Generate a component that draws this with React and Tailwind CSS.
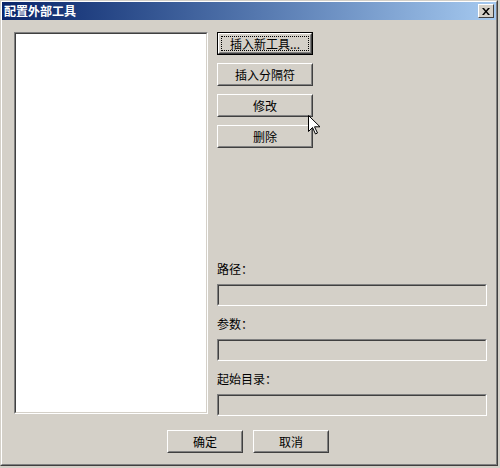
import React from 'react'

const font = { fontFamily: '"Noto Sans CJK SC", "Liberation Sans", sans-serif' }

function Btn({ children, isDefault }) {
  if (isDefault) {
    return (
      <div className="w-[96px] h-[23px] border border-black">
        <div className="w-full h-full border border-t-white border-l-white border-r-[#404040] border-b-[#404040] bg-[#d4d0c8]">
          <div className="w-full h-full border border-t-[#d4d0c8] border-l-[#d4d0c8] border-r-[#808080] border-b-[#808080] p-[1px]">
            <div className="w-full h-full border border-dotted border-black flex items-center justify-center text-[12px] text-black leading-none">
              {children}
            </div>
          </div>
        </div>
      </div>
    )
  }
  return (
    <div className="w-[96px] h-[23px] border border-t-white border-l-white border-r-[#404040] border-b-[#404040] bg-[#d4d0c8]">
      <div className="w-full h-full border border-t-[#d4d0c8] border-l-[#d4d0c8] border-r-[#808080] border-b-[#808080] flex items-center justify-center text-[12px] text-black leading-none">
        {children}
      </div>
    </div>
  )
}

function Sunken({ className, bg }) {
  return (
    <div className={`border border-t-[#808080] border-l-[#808080] border-r-white border-b-white ${className}`}>
      <div className={`w-full h-full border border-t-[#404040] border-l-[#404040] border-r-[#d4d0c8] border-b-[#d4d0c8] ${bg}`} />
    </div>
  )
}

export default function App() {
  return (
    <div className="w-[500px] h-[468px] bg-[#d4d0c8] overflow-hidden relative" style={font}>
      <div className="w-[498px] h-[466px] border border-t-[#d4d0c8] border-l-[#d4d0c8] border-r-[#404040] border-b-[#404040]">
        <div className="w-full h-full border border-t-white border-l-white border-r-[#808080] border-b-[#808080] flex flex-col">
          {/* title bar */}
          <div className="h-[18px] bg-gradient-to-r from-[#0a246a] to-[#a6caf0] flex items-center justify-between pl-[2px] pr-[2px]">
            <span className="text-white font-bold text-[12px] leading-none">配置外部工具</span>
            <div className="w-[16px] h-[14px] border border-t-white border-l-white border-r-[#404040] border-b-[#404040] bg-[#d4d0c8] flex items-center justify-center">
              <svg width="8" height="7" viewBox="0 0 8 7">
                <path d="M0 0h2l2 2.5L6 0h2L5 3.5 8 7H6L4 4.5 2 7H0l3-3.5z" fill="#000" />
              </svg>
            </div>
          </div>

          {/* body */}
          <div className="flex pl-[12px] pt-[12px]">
            <Sunken className="w-[194px] h-[382px]" bg="bg-white" />
            <div className="ml-[9px] w-[270px] h-[384px] flex flex-col">
              <div className="flex flex-col gap-[8px]">
                <Btn isDefault>插入新工具...</Btn>
                <Btn>插入分隔符</Btn>
                <Btn>修改</Btn>
                <Btn>删除</Btn>
              </div>
              <div className="mt-auto flex flex-col">
                <div className="text-[12px] text-black leading-none h-[12px]">路径：</div>
                <Sunken className="mt-[9px] w-[270px] h-[22px]" bg="bg-[#d4d0c8]" />
                <div className="mt-[12px] text-[12px] text-black leading-none h-[12px]">参数：</div>
                <Sunken className="mt-[9px] w-[270px] h-[22px]" bg="bg-[#d4d0c8]" />
                <div className="mt-[12px] text-[12px] text-black leading-none h-[12px]">起始目录：</div>
                <Sunken className="mt-[9px] w-[270px] h-[22px]" bg="bg-[#d4d0c8]" />
              </div>
            </div>
          </div>

          {/* bottom buttons */}
          <div className="flex justify-center gap-[10px] mt-[14px] pr-[2px]">
            <div className="w-[76px] h-[23px] border border-t-white border-l-white border-r-[#404040] border-b-[#404040]">
              <div className="w-full h-full border border-t-[#d4d0c8] border-l-[#d4d0c8] border-r-[#808080] border-b-[#808080] flex items-center justify-center text-[12px] leading-none">确定</div>
            </div>
            <div className="w-[76px] h-[23px] border border-t-white border-l-white border-r-[#404040] border-b-[#404040]">
              <div className="w-full h-full border border-t-[#d4d0c8] border-l-[#d4d0c8] border-r-[#808080] border-b-[#808080] flex items-center justify-center text-[12px] leading-none">取消</div>
            </div>
          </div>
        </div>
      </div>

      {/* mouse cursor */}
      <svg className="absolute left-[308px] top-[115px]" width="12" height="20" viewBox="0 0 12 20">
        <path d="M0.5 0.5v16l4-4 3 6.5 2-1-3-6.2h5.5z" fill="#fff" stroke="#000" strokeWidth="1" />
      </svg>
    </div>
  )
}
